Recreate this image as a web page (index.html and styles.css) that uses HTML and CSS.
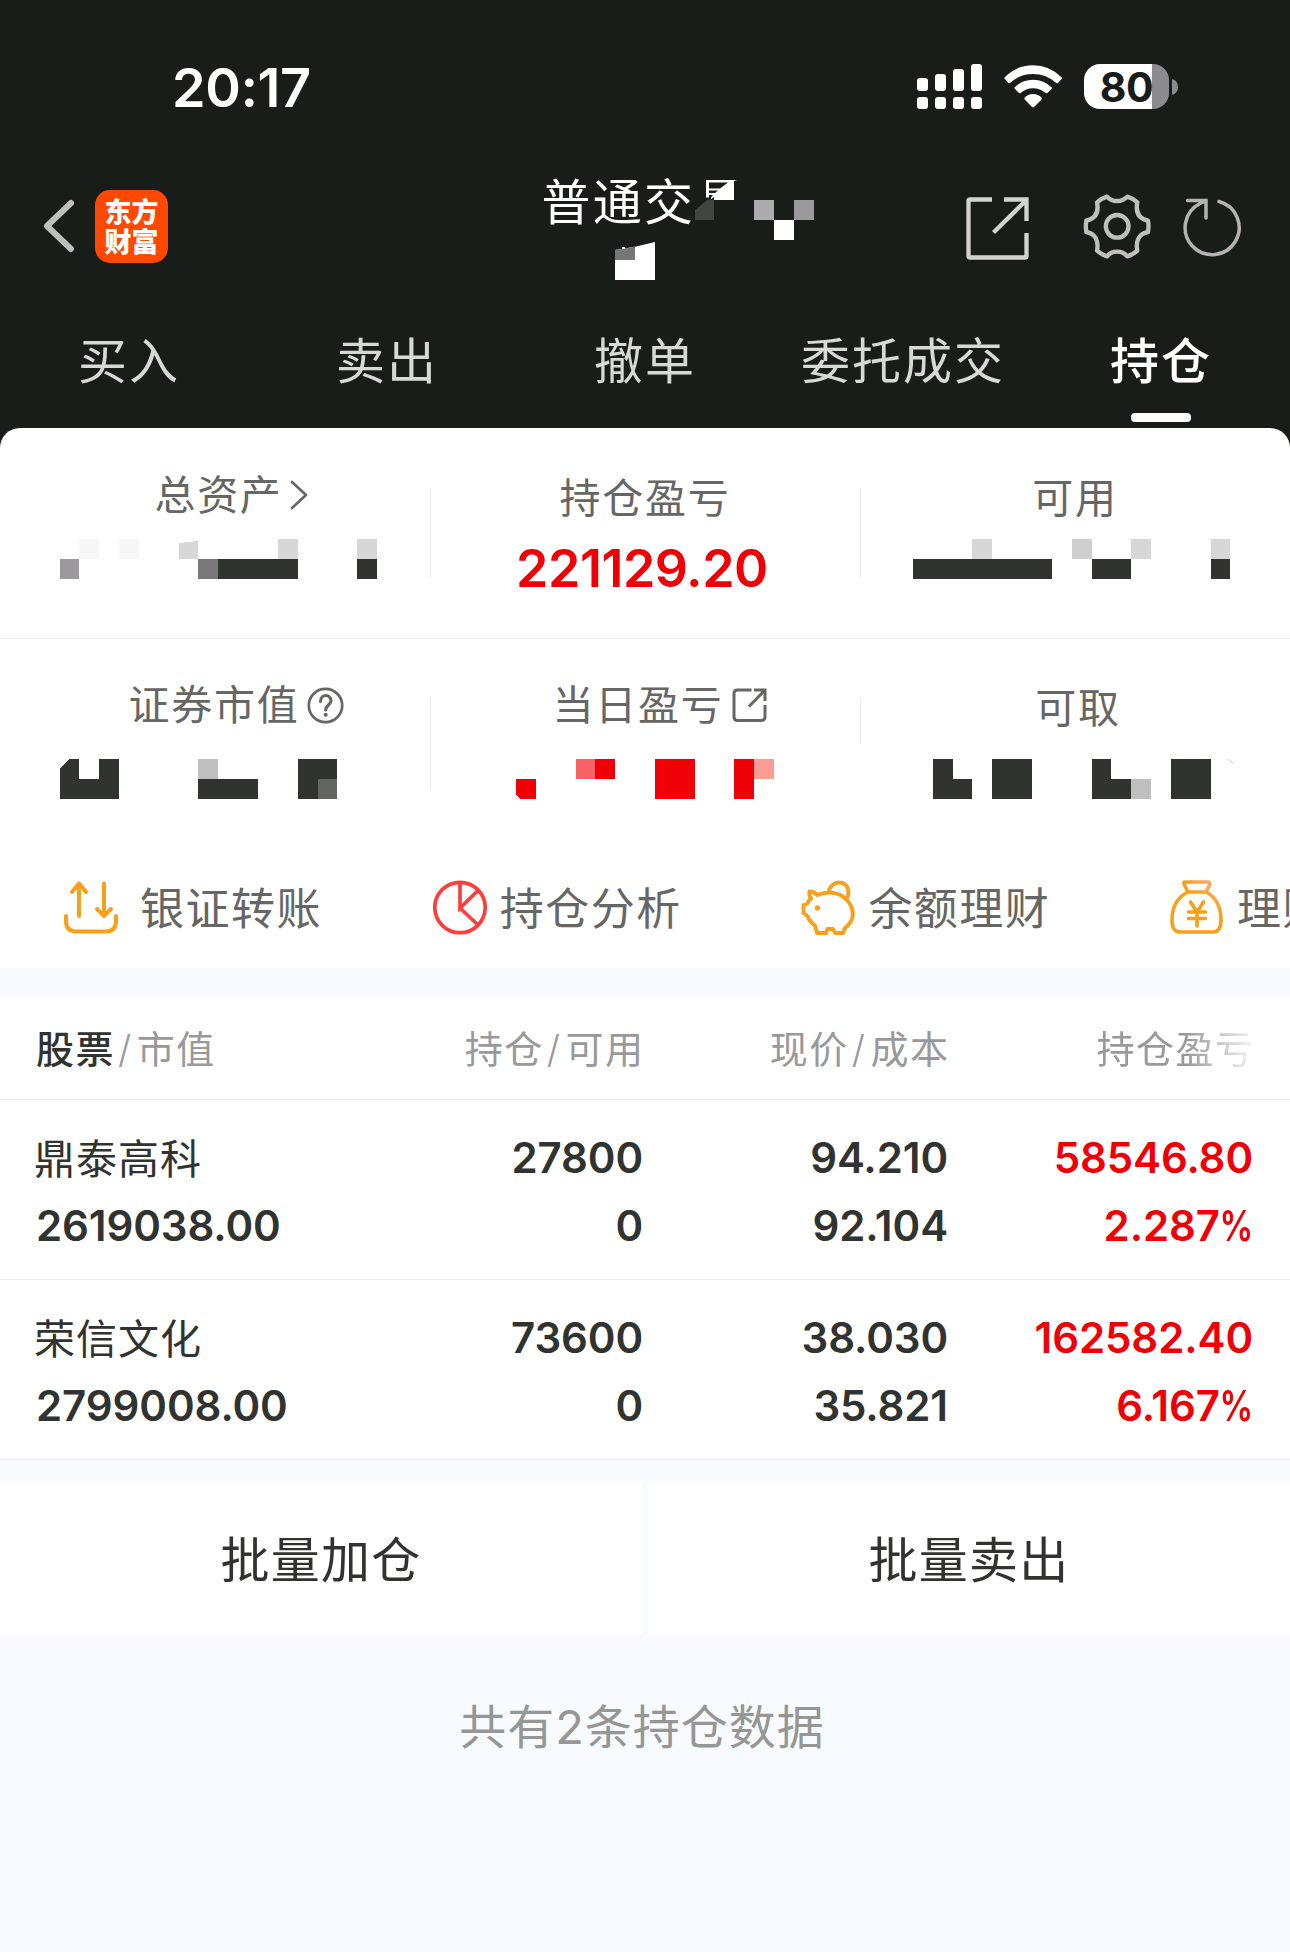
FILE: index.html
```html
<!DOCTYPE html>
<html lang="zh-CN">
<head>
<meta charset="utf-8">
<title>持仓</title>
<link rel="stylesheet" href="styles.css">
</head>
<body>
<header class="top">
  <div class="status">
    <span class="clock">20:17</span>
    <div class="status-icons">
      <svg class="signal" width="65" height="45" viewBox="0 0 65 45" fill="#fff">
        <rect x="0" y="14" width="11" height="13" rx="3"/><rect x="18" y="10" width="11" height="17" rx="3"/><rect x="36" y="5" width="11" height="22" rx="3"/><rect x="54" y="0" width="11" height="27" rx="3"/>
        <rect x="0" y="33" width="11" height="12" rx="3"/><rect x="18" y="33" width="11" height="12" rx="3"/><rect x="36" y="33" width="11" height="12" rx="3"/><rect x="54" y="33" width="11" height="12" rx="3"/>
      </svg>
      <svg class="wifi" width="58" height="45" viewBox="430 72 174 135" fill="#fff">
        <path d="M431 113Q467 76 517 76T604 113Q604 116 602 118L592 129Q590 131 587 129Q557 102 517 102T448 129Q445 131 443 129L433 118Q431 116 431 113Z"/>
        <path d="M461 143Q484 119 517 119T574 143Q574 145 572 147L560 159Q558 161 555 159Q539 145 517 145T480 159Q477 161 475 159L463 147Q461 145 461 143Z"/>
        <path d="M491 174Q501 162 517 162T544 174Q544 177 542 179L521 200Q517 203 513 200L493 179Q491 177 491 174Z"/>
      </svg>
      <div class="battery"><span class="battery-level">80</span></div>
      <svg class="battery-tip" width="6" height="16" viewBox="0 0 6 16"><path d="M0 0Q6 2 6 8T0 16Z" fill="#8e8b8f"/></svg>
    </div>
  </div>
  <nav class="nav">
    <svg class="back" width="31" height="56" viewBox="0 0 31 56" fill="none" stroke="#bfbfbf" stroke-width="6" stroke-linecap="round" stroke-linejoin="round"><path d="M28 5L4 28L28 51"/></svg>
    <div class="logo"><span>东方</span><span>财富</span></div>
    <div class="title">
      <span class="title-text">普通交</span>
      <svg class="title-mask" width="120" height="104" viewBox="694 178 120 104">
        <path d="M695 210L708 199.500L714 200V220H695Z" fill="#444542"/>
        <path d="M706 180H737L734 181V200H714V197L711 199V197.500H706ZM709 182.500V188.500H720L728 182.500ZM709 190.500V193H715L718 190.500ZM709 195V197.500H711L713 195Z" fill="#fff" fill-rule="evenodd"/>
        <rect x="754" y="200" width="20" height="20" fill="#adabae"/><rect x="794" y="200" width="20" height="20" fill="#9c999c"/><rect x="774" y="220" width="20" height="20" fill="#fff"/>
      </svg>
      <svg class="title-mask-low" width="40" height="38" viewBox="615 242 40 38">
        <path d="M615 250L635 246.700L655 242V280H615Z" fill="#fff"/><path d="M615 250L635 246.700V260H615Z" fill="#777577"/><rect x="622" y="247" width="3" height="2" fill="#fff"/>
      </svg>
    </div>
    <svg class="share" width="64" height="64" viewBox="0 0 64 64" fill="none" stroke="#d3d3d3" stroke-width="4.300"><path d="M26 2.500H4Q2.500 2.500 2.500 4V59Q2.500 60.500 4 60.500H59Q60.500 60.500 60.500 59V36M38 2.500H60.500V24M60 3.500L27.500 35.500"/></svg>
    <svg class="gear" width="68" height="66" viewBox="670 460 204 198" fill="none" stroke="#bfbfbf" stroke-width="13" stroke-linejoin="round"><path d="M712 488Q726 476 742 471Q754 484 772 484T803 471Q820 476 833 488C827 518 838 537 865 543Q868 560 865 577C838 582 827 603 833 633Q820 645 803 650Q791 636 772 636T742 650Q726 645 712 633C718 603 707 582 680 577Q677 560 680 543C707 537 718 518 712 488Z"/><circle cx="772.500" cy="560" r="34"/></svg>
    <svg class="refresh" width="60" height="60" viewBox="0 0 60 60" fill="none" stroke="#b4b2b4" stroke-width="3.500"><path d="M36 4.500A27 27 0 1 1 17 6.500L23 3.500M4.500 3.500H23V21" stroke-linecap="round"/></svg>
  </nav>
  <div class="tabs">
    <span class="tab">买入</span><span class="tab">卖出</span><span class="tab">撤单</span><span class="tab">委托成交</span><span class="tab active">持仓</span>
  </div>
</header>

<section class="summary">
  <div class="sum-row first">
    <div class="cell">
      <div class="label shift-assets">总资产<svg class="more" width="19" height="32" viewBox="0 0 19 32" fill="none" stroke="#666664" stroke-width="2.700"><path d="M2 3L16 16L2 29" stroke-linecap="round" stroke-linejoin="round"/></svg></div>
      <svg class="mask" width="430" height="40" viewBox="0 0 430 40" shape-rendering="crispEdges">
        <path d="M79 0h20v20h-20zM119 0h20v20h-20z" fill="#f7f7f7"/><path d="M60 20h19v20h-19z" fill="#9c999c"/><path d="M179 4L198 2V20H179ZM278 0h20v20h-20zM357 0h20v20h-20z" fill="#d7d7d7"/><path d="M198 20h20v20h-20z" fill="#7b787c"/><path d="M218 20h80v20h-80zM357 20h20v20h-20z" fill="#313330"/>
      </svg>
    </div>
    <div class="cell ruled">
      <div class="label low">持仓盈亏</div>
      <div class="value">221129.20</div>
    </div>
    <div class="cell ruled">
      <div class="label low">可用</div>
      <svg class="mask" width="430" height="40" viewBox="0 0 430 40" shape-rendering="crispEdges">
        <path d="M112 0h20v20h-20zM271 0h20v20h-20zM351 0h19v20h-19z" fill="#d7d7d7"/><path d="M212 0h20v20h-20z" fill="#cfcfcf"/><path d="M53 20h139v20h-139zM232 20h39v20h-39zM351 20h19v20h-19z" fill="#313330"/>
      </svg>
    </div>
  </div>
  <div class="sum-row second">
    <div class="cell">
      <div class="label shift-market">证券市值<svg class="help" width="37" height="37" viewBox="0 0 37 37" fill="none" stroke="#666664" stroke-width="2.700"><circle cx="18.500" cy="18.500" r="16.700"/><path d="M13.500 14.500C13.500 6.500 24 6.800 24 13.800C24 18 18.700 18 18.700 23" stroke-width="3.200" stroke-linecap="round"/><circle cx="18.700" cy="27.800" r="2" fill="#666664" stroke="none"/></svg></div>
      <svg class="mask" width="430" height="40" viewBox="0 0 430 40" shape-rendering="crispEdges">
        <path d="M69 0H79V20H99V0H119V40H60V9ZM198 20h60v20h-60zM298 0h39v40h-39z" fill="#313330"/><path d="M198 0h20v20h-20z" fill="#bfbfbf"/><path d="M318 20h19v20h-19z" fill="#636562"/>
      </svg>
    </div>
    <div class="cell ruled">
      <div class="label shift-today">当日盈亏<svg class="open" width="35" height="35" viewBox="0 0 35 35" fill="none" stroke="#666664" stroke-width="3"><path d="M19.500 2H5.500Q2 2 2 5.500V29Q2 32.500 5.500 32.500H29.500Q33 32.500 33 29V17M22 2H33V13M33 2L17 18.500"/></svg></div>
      <svg class="mask" width="430" height="40" viewBox="0 0 430 40" shape-rendering="crispEdges">
        <path d="M86 20h20v20h-15.500l-4.500-4zM165 0h20v20h-20zM225 0h40v40h-40zM304 0h20v40h-20z" fill="#ef0006"/><path d="M146 0h19v20h-19z" fill="#f86265"/><path d="M324 0h20v20h-20z" fill="#ff9d95"/>
      </svg>
    </div>
    <div class="cell ruled short">
      <div class="label low shift-cash">可取</div>
      <svg class="mask" width="430" height="40" viewBox="0 0 430 40" shape-rendering="crispEdges">
        <path d="M73 0H93V20H112V40H73ZM132 0h40v40h-40zM232 0H251V20H271V40H232ZM311 0h40v40h-40z" fill="#313330"/><path d="M271 20h20v20h-20z" fill="#bfbfbf"/><path d="M367 0l3 1.500l3 3" stroke="#ddd" fill="none"/>
      </svg>
    </div>
  </div>
  <div class="actions">
    <div class="action first-action"><svg width="54" height="56" viewBox="0 0 54 56" fill="none" stroke="#f9a01b" stroke-width="4" stroke-linecap="round" stroke-linejoin="round"><path d="M15 36V3.500M8 12L15 3.500L22 12M40 3.500V36M33 29L40 36L47 29M2 36V41Q2 51.500 12.500 51.500H41.500Q52 51.500 52 41V36"/></svg><span>银证转账</span></div>
    <div class="action"><svg width="54" height="56" viewBox="0 0 54 56" fill="none" stroke="#ff3e3c" stroke-width="3.700"><circle cx="27" cy="27.500" r="25.200"/><path d="M27 3V28L45 10.500M27 28L45.500 45.500"/></svg><span>持仓分析</span></div>
    <div class="action"><svg width="54" height="56" viewBox="0 0 54 56" fill="none" stroke="#f9a01b" stroke-width="3.900" stroke-linejoin="round"><path d="M8.500 11.500Q13 11.500 16.500 15C27 11 38 12 45.500 19.500C56 31 52 42 44 48L42 53H34L32 49H26.500L25 53H16L14 45.500Q8.500 41.500 6.500 36L2.500 33V25L6.500 23.500Q7.500 20 10 18.500Q7.500 15 8.500 11.500Z"/><path d="M27.500 13C29 -1 48 -1 47.500 13Q47.300 16 45.500 19"/><circle cx="16.500" cy="28" r="2.700" fill="#f9a01b" stroke="none"/></svg><span>余额理财</span></div>
    <div class="action"><svg width="54" height="56" viewBox="0 0 54 56" fill="none" stroke="url(#bag)" stroke-width="3.600" stroke-linejoin="round" stroke-linecap="round"><defs><linearGradient id="bag" gradientUnits="userSpaceOnUse" x1="20" y1="30" x2="42" y2="8"><stop offset=".55" stop-color="#f9a01b"/><stop offset="1" stop-color="#ffa65e"/></linearGradient></defs><path d="M15 2H38Q40.500 2 39.500 5L36 12H18L14.500 5Q13 2 15 2ZM18 12Q2 20 2 40Q2 52 10 52H43Q51 52 51 40Q51 20 36 12M20.500 22L27 32L33.500 22M27 32V46M18.500 32H35.500M18.500 38.500H35.500"/></svg><span>理财</span></div>
  </div>
</section>

<section class="holdings">
  <div class="thead">
    <div><b>股票</b><i>/</i>市值</div><div>持仓<i>/</i>可用</div><div>现价<i>/</i>成本</div><div class="faded">持仓盈亏</div>
  </div>
  <div class="stock">
    <div><span class="name">鼎泰高科</span><span>2619038.00</span></div>
    <div><span>27800</span><span>0</span></div>
    <div><span>94.210</span><span>92.104</span></div>
    <div class="up"><span>58546.80</span><span>2.287<em>%</em></span></div>
  </div>
  <div class="stock">
    <div><span class="name">荣信文化</span><span>2799008.00</span></div>
    <div><span>73600</span><span>0</span></div>
    <div><span>38.030</span><span>35.821</span></div>
    <div class="up"><span>162582.40</span><span>6.167<em>%</em></span></div>
  </div>
</section>
<div class="batch"><div>批量加仓</div><div>批量卖出</div></div>
<p class="count">共有2条持仓数据</p>
</body>
</html>
```

FILE: styles.css
```css
* { box-sizing: border-box; }
body {
  margin: 0;
  width: 1290px;
  height: 1952px;
  overflow: hidden;
  background: #f7fbff;
  color: #313330;
  font-family: Inter, "Noto Sans CJK SC", sans-serif;
  white-space: nowrap;
}
svg { display: block; flex: none; }

.top { height: 448px; background: #191d1a; }
.status {
  height: 142px;
  padding: 64px 112px 0 172px;
  display: flex;
  justify-content: space-between;
  color: #fff;
}
.clock { font-size: 54px; line-height: 47px; font-weight: 600; letter-spacing: -.3px; }
.status-icons { display: flex; height: 45px; }
.wifi { margin-left: 22px; }
.battery {
  width: 85px;
  margin-left: 22.500px;
  border-radius: 16px;
  background: linear-gradient(90deg, #fff 68px, #8e8b8f 68px);
  text-align: center;
}
.battery-level { color: #191d1a; font-size: 41px; line-height: 46px; font-weight: 700; letter-spacing: -.5px; }
.battery-tip { margin: 15px 0 0 3px; }

.nav { height: 169px; display: flex; padding-left: 43px; }
.back { margin-top: 56px; }
.logo {
  width: 73px;
  height: 73px;
  margin: 48px 0 0 21px;
  padding-top: 8px;
  border-radius: 15px;
  background: #ff4800;
  color: #fff;
  display: flex;
  flex-direction: column;
  align-items: center;
  font-size: 27px;
  line-height: 30px;
  font-weight: 900;
}
.title { position: relative; width: 270px; height: 140px; margin: 36px 0 0 375px; color: #fff; }
.title-text { display: block; margin-left: -1.500px; font-size: 49px; line-height: 49px; letter-spacing: 2.300px; }
.title-mask { position: absolute; left: 151px; top: 0; }
.title-mask-low { position: absolute; left: 72px; top: 64px; }
.share { margin: 55px 0 0 153px; }
.gear { margin: 51px 0 0 53px; }
.refresh { margin: 55px 0 0 32px; }

.tabs { display: grid; grid-template-columns: repeat(5, 258px); }
.tab {
  display: flex;
  flex-direction: column;
  align-items: center;
  height: 117px;
  padding-top: 22px;
  font-size: 49px;
  line-height: 58px;
  letter-spacing: 2px;
  color: #d8d8d8;
}
.tab.active { color: #fff; font-weight: 500; }
.tab.active::after { content: ""; width: 60px; height: 9px; margin-top: 22px; border-radius: 4px; background: #fff; }

.summary { margin-top: -20px; height: 540px; background: #fff; border-radius: 20px 20px 0 0; }
.sum-row { display: grid; grid-template-columns: repeat(3, 430px); }
.first { height: 211px; padding-top: 43px; border-bottom: 1px solid #ebebeb; }
.second { height: 210px; padding-top: 42px; }
.cell { position: relative; }
.ruled::before { content: ""; position: absolute; left: 0; top: 17px; width: 1px; height: 90px; background: #ebebeb; }
.ruled.short::before { height: 46px; }
.label {
  height: 68px;
  display: flex;
  justify-content: center;
  color: #666664;
  font-size: 41px;
  line-height: 48px;
  letter-spacing: 1.700px;
}
.second .label { height: 78px; }
.label.low { padding-top: 3px; }
.shift-assets { padding-left: 33px; }
.shift-market { padding-left: 43px; }
.shift-today { padding-left: 30px; }
.shift-cash { padding-left: 6px; }
.more { margin: 8px 0 0 7px; }
.help { margin: 6px 0 0 8px; }
.open { margin: 7px 0 0 9px; }
.value { padding-right: 6px; text-align: center; color: #ef0006; font-size: 52px; line-height: 59px; font-weight: 600; letter-spacing: -.5px; }

.actions { height: 119px; display: flex; overflow: hidden; padding-left: 64px; }
.action { flex: none; width: 368.700px; display: flex; align-items: center; gap: 13px; color: #666664; font-size: 44px; line-height: 50px; letter-spacing: 1.500px; }
.action svg { margin-top: -1px; }
.first-action { gap: 22px; }

.holdings { margin-top: 30px; background: #fff; }
.thead, .stock {
  display: grid;
  grid-template-columns: 286px 321px 305px 305px;
  padding-left: 36px;
  text-align: right;
  border-bottom: 1px solid #ebebeb;
}
.thead > :first-child, .stock > :first-child { text-align: left; }
.thead { height: 102px; padding-top: 21px; font-size: 38px; line-height: 60px; letter-spacing: 1.500px; color: #999; }
.thead > :not(:first-child) { margin: 0 -1.500px 0 1.500px; }
.thead b { color: #313330; font-weight: 500; }
.thead i { font-style: normal; font-weight: 300; margin: 0 4px 0 3px; }
.faded { -webkit-mask-image: linear-gradient(90deg, #000 235px, transparent 312px); mask-image: linear-gradient(90deg, #000 235px, transparent 312px); }
.stock { height: 180px; padding-top: 24px; font-size: 42px; line-height: 68px; font-weight: 600; letter-spacing: -.1px; }
.stock span { display: block; }
.stock .name { margin: 1px 0 -1px -2px; font-size: 41px; font-weight: 400; letter-spacing: 1px; }
.stock em { display: inline-block; margin-left: -9px; font-style: normal; transform: scaleX(.8); transform-origin: right; }
.stock .up { color: #ef0006; }

.batch { margin-top: 23px; display: grid; grid-template-columns: 642px 642px; justify-content: space-between; }
.batch div { height: 151px; background: #fff; text-align: center; font-size: 49px; line-height: 156px; letter-spacing: 1.200px; }
.count { margin: 63px 0 0; padding-right: 6px; text-align: center; color: #969693; font-size: 47px; line-height: 60px; letter-spacing: 1px; }
```
